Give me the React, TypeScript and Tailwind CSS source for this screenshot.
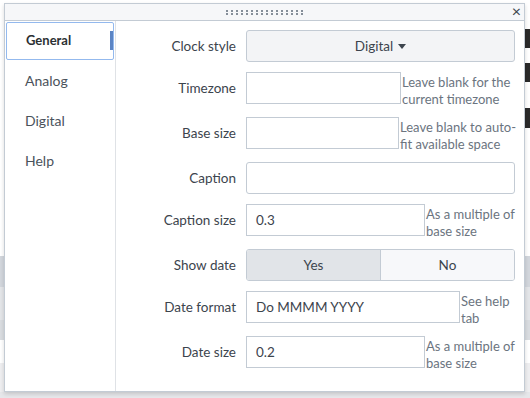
import React from "react";

const font = { fontFamily: "Lato, 'Open Sans', sans-serif" };

function Grip() {
  return (
    <div className="flex flex-col gap-[1px]">
      {[0, 1].map((r) => (
        <div key={r} className="flex gap-[3px]">
          {Array.from({ length: 16 }).map((_, i) => (
            <span key={i} className="block w-[2px] h-[2px] bg-[#858e99]" />
          ))}
        </div>
      ))}
    </div>
  );
}

function Row({
  label,
  help,
  helpWidth,
  children,
}: {
  label: string;
  help?: [string, string];
  helpWidth?: string;
  children: React.ReactNode;
}) {
  return (
    <div className="flex items-start mb-[10px]">
      <div className="w-[130px] shrink-0 pr-[10px] h-[32px] flex items-center justify-end text-[13.5px] text-[#3c444d]">
        {label}
      </div>
      <div className="flex-1 flex items-start min-w-0">
        <div className="flex-1 min-w-0">{children}</div>
        {help && (
          <div
            className={`${helpWidth} shrink-0 pl-[1px] pt-[2px] text-[13px] leading-[16.5px] whitespace-nowrap text-[#6b7480]`}
          >
            <div>{help[0]}</div>
            <div>{help[1]}</div>
          </div>
        )}
      </div>
    </div>
  );
}

function Input({ value }: { value?: string }) {
  return (
    <div className="h-[32px] border border-[#c3cbd4] bg-white flex items-center px-[9px] text-[13.5px] text-[#3c444d]">
      {value}
    </div>
  );
}

export default function App() {
  const tabs = ["General", "Analog", "Digital", "Help"];
  return (
    <div className="relative w-[530px] h-[398px] overflow-hidden bg-white" style={font}>
      {/* page behind the dialog */}
      <div className="flex flex-col">
        <div className="h-[256px] bg-white" />
        <div className="h-[31px] bg-[#d2d6dc]" />
        <div className="h-[33px] bg-[#e3e5e8]" />
        <div className="h-[20px] bg-[#d9dce0]" />
        <div className="h-[23px] bg-white" />
        <div className="h-[29px] bg-[#eeeef0]" />
        <div className="h-[6px] bg-[#e6e7ea]" />
      </div>
      <div className="absolute right-0 top-[29px] w-[5px] h-[19px] bg-[#2a2a2a]" />
      <div className="absolute right-0 top-[63px] w-[5px] h-[19px] bg-[#2a2a2a]" />
      <div className="absolute right-0 top-[108px] w-[5px] h-[20px] bg-[#2a2a2a]" />

      {/* dialog */}
      <div className="absolute left-[4px] top-[3px] w-[521px] h-[389px] bg-white border border-[#c3cbd4] shadow-[0_2px_4px_rgba(0,0,0,0.15)] flex flex-col">
        <div className="relative h-[17px] shrink-0 bg-[#f6f7f9] border-b border-[#c3cbd4] flex items-center justify-center">
          <Grip />
          <span className="absolute right-[3px] top-[-2px] text-[16px] leading-[18px] text-[#3c444d]">
            ×
          </span>
        </div>
        <div className="flex flex-1 min-h-0">
          <div className="w-[111px] shrink-0 border-r border-[#dfe2e6] pt-[1px] pl-[1px] pr-[1px]">
            {tabs.map((t, i) => (
              <div
                key={t}
                className={`relative h-[38px] flex items-center pl-[19px] ${
                  i === 0
                    ? "mb-[1px] border border-[#93b9ee] rounded-[2px] text-[#2b3033] font-bold text-[13px]"
                    : "mb-[2px] text-[#4a525b] text-[14px]"
                }`}
              >
                {t}
                {i === 0 && (
                  <span className="absolute right-0 top-[8px] w-[3px] h-[19px] bg-[#5b84c4]" />
                )}
              </div>
            ))}
          </div>
          <div className="flex-1 pt-[9px] pr-[9px]">
            <Row label="Clock style">
              <div className="h-[32px] border border-[#c3cbd4] rounded-[3px] bg-[#f3f4f6] flex items-center justify-center text-[13.5px] text-[#3c444d]">
                Digital
                <span className="ml-[5px] w-0 h-0 border-l-[4px] border-r-[4px] border-t-[5px] border-l-transparent border-r-transparent border-t-[#3c444d]" />
              </div>
            </Row>
            <Row label="Timezone" help={["Leave blank for the", "current timezone"]} helpWidth="w-[114px]">
              <Input />
            </Row>
            <Row label="Base size" help={["Leave blank to auto-", "fit available space"]} helpWidth="w-[116px]">
              <Input />
            </Row>
            <Row label="Caption">
              <div className="h-[32px] border border-[#c3cbd4] rounded-[3px] bg-white" />
            </Row>
            <Row label="Caption size" help={["As a multiple of", "base size"]} helpWidth="w-[90px]">
              <Input value="0.3" />
            </Row>
            <Row label="Show date">
              <div className="h-[32px] flex border border-[#c3cbd4] rounded-[3px] overflow-hidden text-[13.5px] text-[#3c444d]">
                <div className="flex-1 bg-[#e1e4e8] border-r border-[#c3cbd4] flex items-center justify-center">
                  Yes
                </div>
                <div className="flex-1 bg-[#f7f8fa] flex items-center justify-center">No</div>
              </div>
            </Row>
            <Row label="Date format" help={["See help", "tab"]} helpWidth="w-[55px]">
              <Input value="Do MMMM YYYY" />
            </Row>
            <Row label="Date size" help={["As a multiple of", "base size"]} helpWidth="w-[90px]">
              <Input value="0.2" />
            </Row>
          </div>
        </div>
      </div>
    </div>
  );
}
